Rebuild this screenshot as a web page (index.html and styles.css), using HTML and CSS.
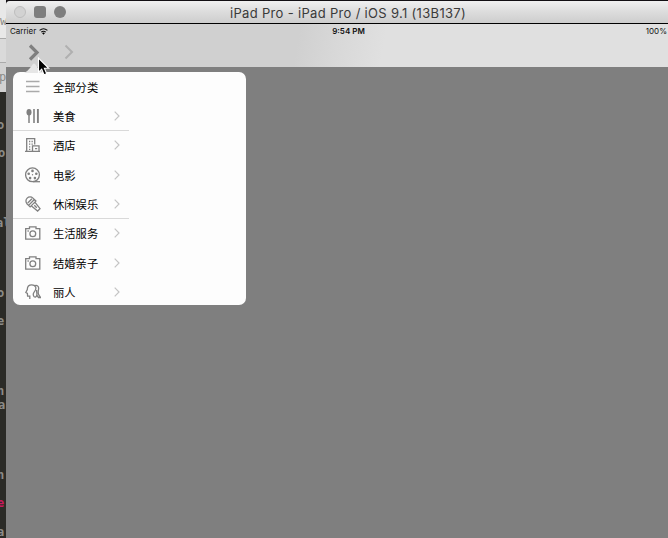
FILE: index.html
```html
<!DOCTYPE html>
<html lang="zh-CN">
<head>
<meta charset="utf-8">
<title>iPad Pro</title>
<link rel="stylesheet" href="styles.css">
</head>
<body>
<svg class="defs" width="0" height="0">
  <symbol id="chev" viewBox="0 0 6 10"><path d="M.7.7 5 5 .7 9.3" fill="none" stroke="#c4c4c4" stroke-width="1.2"/></symbol>
  <symbol id="camera" viewBox="0 0 16 14"><path d="M.7 2.700h3.800V.8h6.500v1.900h3.800v10.500H.7z"/><circle cx="7.800" cy="7.700" r="2.900"/><path d="M2.500 5h1.300"/></symbol>
</svg>
<div class="desktop">
  <aside class="behind">
    <div class="behind-top"><span class="w">w</span><span class="p">p</span></div>
    <div class="code">
      <span class="l1">o</span><span class="l2">o.</span><span class="l3">al</span><span class="l4">o</span><span class="l5">e</span><span class="l6">n</span><span class="l7">a</span><span class="l8">n</span><span class="l9 pink">e</span><span class="l10">a</span>
    </div>
  </aside>
  <main class="window">
    <header class="titlebar">
      <div class="lights"><i class="off"></i><i class="square"></i><i></i></div>
      <h1>iPad Pro - iPad Pro / iOS 9.1 (13B137)</h1>
    </header>
    <section class="navbar">
      <div class="status">
        <span class="carrier">Carrier
          <svg width="9" height="7" viewBox="0 0 9 7"><path d="M.6 2.4Q4.5-.9 8.4 2.4M2.2 4.1q2.3-1.8 4.6 0" fill="none" stroke="#111" stroke-width="1.1"/><path d="M3 5.1q1.5-1 3 0L4.5 6.7z"/></svg>
        </span>
        <span class="time">9:54 PM</span>
        <span class="battery">100%</span>
      </div>
      <div class="nav">
        <svg class="nav-a" width="12" height="17" viewBox="0 0 12 17"><path d="m2 1.500 7 7-7 7" fill="none" stroke="#808080" stroke-width="3.200"/></svg>
        <svg class="nav-b" width="11" height="16" viewBox="0 0 11 16"><path d="m1.500 1.500 6.500 6.500-6.500 6.500" fill="none" stroke="#b0b0b0" stroke-width="2"/></svg>
      </div>
    </section>
  </main>
  <div class="popover">
    <svg class="arrow" width="20" height="11" viewBox="0 0 20 11"><path d="M0 11Q3 10 6 6l3-4q1-1 2 0l3 4q3 4 6 5z" fill="#e6e6e6"/></svg>
    <ul class="menu">
      <li><svg class="ico" width="16" height="14" viewBox="0 0 16 14"><path d="M1 1.500h13.500M1 6.500h13.500M1 11.500h13.500" stroke="#aaa" stroke-width="1.500"/></svg><span>全部分类</span></li>
      <li class="line"><svg class="ico" width="16" height="16" viewBox="0 0 16 16"><ellipse cx="4" cy="4.300" rx="2.500" ry="3.300" fill="#808080" stroke="none"/><path d="M4 7v8" stroke-width="1.500"/><path d="M9 1v14" stroke-width="1.600"/><path d="M12.900 1v14" stroke-width="1.900"/></svg><span>美食</span><svg class="chev"><use href="#chev"/></svg></li>
      <li><svg class="ico" width="16" height="16" viewBox="0 0 16 16"><path d="M0 14.300h15M1.700 14.500V1.600h8v6M9 8.900h5v5.600M7.500 14.500V8.900H9"/><path d="M4 4.500h1.300M6.500 4.500h1.300M4 7.200h1.300M6.500 7.200h1.300M4 9.900h1.300M4 12.300h1.300M10 11.600h2.200"/></svg><span>酒店</span><svg class="chev"><use href="#chev"/></svg></li>
      <li><svg class="ico" width="16" height="16" viewBox="0 0 16 16"><circle cx="7.500" cy="7.800" r="6.900"/><g fill="#808080" stroke="none"><circle cx="7.500" cy="3.900" r="1.300"/><circle cx="3.700" cy="6.800" r="1.300"/><circle cx="11.300" cy="6.800" r="1.300"/><circle cx="5.100" cy="11.100" r="1.300"/><circle cx="9.900" cy="11.100" r="1.300"/><circle cx="7.500" cy="7.800" r=".7"/></g><path d="M8 14.700h7"/></svg><span>电影</span><svg class="chev"><use href="#chev"/></svg></li>
      <li class="line"><svg class="ico" width="16" height="16" viewBox="0 0 16 16"><g transform="translate(5.400 5.400) rotate(-45)"><path d="M-4.100 1.500V-.5a4.100 4.100 0 0 1 8.200 0v2zM-4.100 1.500v2.200h8.200V1.500M-2.600 3.700l.9 8.200h3.400l.9-8.200M0 5.500v3.500"/></g><path d="M2.700 7 7 2.700"/></svg><span>休闲娱乐</span><svg class="chev"><use href="#chev"/></svg></li>
      <li><svg class="ico" width="16" height="14"><use href="#camera"/></svg><span>生活服务</span><svg class="chev"><use href="#chev"/></svg></li>
      <li><svg class="ico" width="16" height="14"><use href="#camera"/></svg><span>结婚亲子</span><svg class="chev"><use href="#chev"/></svg></li>
      <li><svg class="ico" width="16" height="16" viewBox="0 0 16 16"><path d="M4.800 15v-2.800H2.600l-.2-2.800-1.600-.9 1.500-2.900C2.300 2.600 4.300.9 6.800.9c2 0 3.200.8 3.800 2 .8 2-.3 4-1.600 5.500-.9 1.200-.9 3 .2 4.400M10 1.600c2.300-.6 4 .9 3.600 3.300-.4 2.500-1 4.500.4 6.300l1.500 2.300h-2l-1.500-2M11.700 6c-.5 2 .7 3.500 0 5.500-.4 1.300-1.400 2-2.500 1.300"/></svg><span>丽人</span><svg class="chev"><use href="#chev"/></svg></li>
    </ul>
  </div>
  <svg class="cursor" width="13" height="20" viewBox="0 0 13 20"><path d="M1.500 1v14.200l3.200-3 2.300 5.600 2.700-1.100-2.300-5.400h4.300z" fill="#000" stroke="#fff" stroke-width="1.100"/></svg>
</div>
</body>
</html>
```
FILE: styles.css
```css
* { box-sizing: border-box; }
body { margin: 0; overflow: hidden; font-family: "Liberation Sans", "Noto Sans CJK SC", sans-serif; }
.defs { position: absolute; }
.desktop { position: relative; display: flex; width: 668px; height: 538px; background: #120f13; }
.behind { position: relative; width: 6px; overflow: hidden; color: #8b8b87; font: bold 12px/14px "DejaVu Sans Mono", monospace; }
.behind span { position: absolute; left: -3px; }
.behind .w { top: 14px; left: 0; font-weight: 400; }
.behind .p { top: 70px; left: -1px; font-weight: 400; }
.behind-top { height: 92px; background: linear-gradient(#e8e8e8 0 38px, #aaa 38px 39px, #dadada 39px 62px, #aaa 62px 63px, #d2d2d2 63px); }
.code { height: 446px; background: #2b2b27; }
.l1 { top: 118px; } .l2 { top: 146px; } .l3 { top: 216px; } .l4 { top: 286px; } .l5 { top: 314px; }
.l6 { top: 384px; } .l7 { top: 398px; } .l8 { top: 468px; } .l9 { top: 496px; } .l10 { top: 525px; }
.behind .l2, .behind .l7 { left: -2px; letter-spacing: -1px; }
.behind .l3 { left: -4px; }
.code .pink { color: #c9185d; }
.window { flex: 1; margin-top: 1px; display: flex; flex-direction: column; background: #7f7f7f; border-top-left-radius: 4px; overflow: hidden; }
.titlebar { position: relative; height: 23px; display: flex; align-items: center; background: linear-gradient(#f0f0f0, #dedede 45%, #cdcdcd); border-bottom: 1px solid #000; }
.lights { display: flex; gap: 8px; padding-left: 8px; }
.lights i { width: 12px; height: 12px; border-radius: 50%; background: #7e7e7e; }
.lights .off { background: #d2d2d2; border: 1px solid #bebebe; }
.lights .square { border-radius: 3px; }
h1 { margin: 1px 0 0 164px; font: 400 13px/20px Inter, sans-serif; color: #3a3a3a; white-space: nowrap; letter-spacing: .32px; }
.navbar { height: 43px; background: linear-gradient(100deg, #d0d0d0 0 44%, #d8d8d8 50%, #e0e0e0 57%); }
.status { display: grid; grid-template-columns: 1fr auto 1fr; height: 14px; align-items: center; padding: 0 1px 0 4px; font: 8px/14px Inter, sans-serif; color: #111; }
.carrier { display: flex; align-items: center; gap: 3px; }
.time { font-weight: 600; transform: translateX(10px); }
.battery { text-align: right; }
.nav { display: flex; align-items: center; gap: 24px; height: 28px; padding-left: 22px; }
.popover { position: absolute; left: 13px; top: 72px; width: 233px; height: 233px; border-radius: 7px; background: #fdfdfd; }
.arrow { position: absolute; left: 11px; top: -10px; }
.menu { position: relative; list-style: none; margin: 0; padding: 0; width: 116px; }
.menu li { display: flex; align-items: center; height: 29.33px; padding: 1px 9px 0 12px; border-bottom: 1px solid transparent; font: 11.3px/16px "Noto Sans CJK SC", sans-serif; color: #000; }
.menu li.line { border-bottom-color: #d9d9d9; }
.menu span { margin-left: 12px; }
.ico { flex: none; fill: none; stroke: #808080; stroke-width: 1.3; }
.chev { width: 6px; height: 10px; margin-left: auto; }
.cursor { position: absolute; left: 37px; top: 57px; }
```
